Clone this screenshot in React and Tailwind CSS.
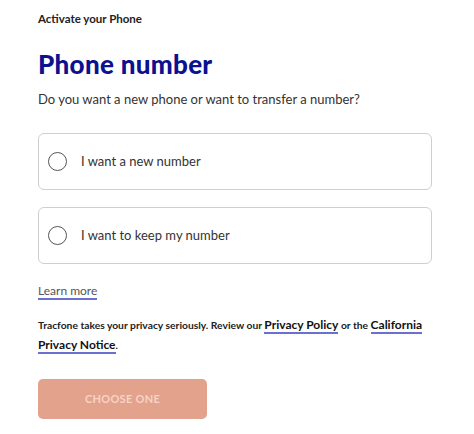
import React, { useState } from 'react';

const options = [
  { id: 'new', label: 'I want a new number' },
  { id: 'keep', label: 'I want to keep my number' },
];

export default function App() {
  const [choice, setChoice] = useState(null);

  return (
    <div className="min-h-screen bg-white px-[38px] pt-[11px] text-[#222] font-['Lato','Liberation_Sans',sans-serif]">
      <p className="text-[11.5px] font-bold leading-[16px] text-[#222]">Activate your Phone</p>

      <h1 className="mt-[21px] text-[26px] font-black leading-[32px] tracking-[0.3px] text-[#0b118f]">
        Phone number
      </h1>

      <p className="mt-[9px] text-[13px] leading-[20px] text-[#333]">
        Do you want a new phone or want to transfer a number?
      </p>

      {/* Options */}
      <div className="mt-[24px] flex w-[394px] flex-col gap-[17px]">
        {options.map((o) => (
          <button
            key={o.id}
            type="button"
            onClick={() => setChoice(o.id)}
            className="flex h-[57px] items-center rounded-[6px] border border-[#cfcfcf] bg-white pl-[9px] text-left"
          >
            <span className="flex h-[19px] w-[19px] items-center justify-center rounded-full border border-[#555]">
              {choice === o.id && <span className="h-[11px] w-[11px] rounded-full bg-[#0b118f]" />}
            </span>
            <span className="ml-[14px] text-[13px] text-[#333]">{o.label}</span>
          </button>
        ))}
      </div>

      <a href="#" className="mt-[19px] inline-block border-b-2 border-[#6b6fd1] text-[12px] leading-[15px] text-[#555]">
        Learn more
      </a>

      <p className="mt-[14px] text-[10.3px] font-bold leading-[19px] text-[#222]">
        Tracfone takes your privacy seriously. Review our{' '}
        <a href="#" className="border-b-2 border-[#6b6fd1] text-[12px] leading-[19px] text-[#111]">Privacy Policy</a> or the{' '}
        <a href="#" className="border-b-2 border-[#6b6fd1] text-[12px] leading-[19px] text-[#111]">California Privacy Notice</a>.
      </p>

      <button
        type="button"
        disabled={!choice}
        className="mt-[24px] flex h-[40px] w-[169px] items-center justify-center rounded-[5px] bg-[#e3a28c] text-[11px] font-bold tracking-[0.3px] text-[#f7d3c6]"
      >
        CHOOSE ONE
      </button>
    </div>
  );
}
